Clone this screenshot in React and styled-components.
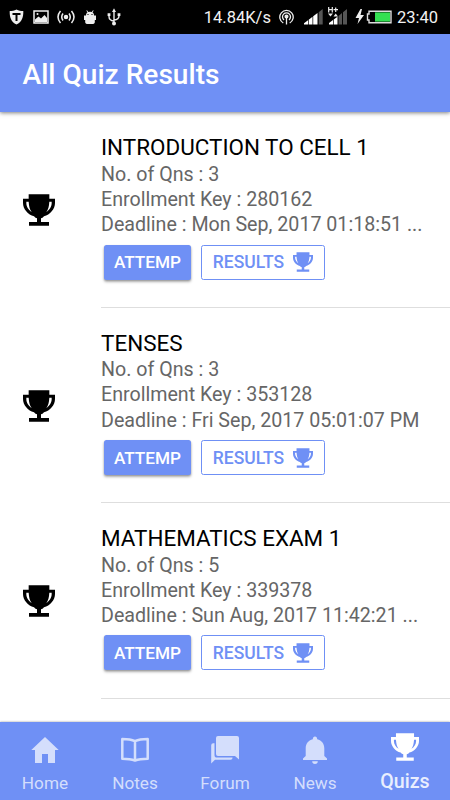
import React from "react";
import styled, { createGlobalStyle } from "styled-components";

const BLUE = "#6f90f5";

const GlobalStyle = createGlobalStyle`
  * { box-sizing: border-box; }
  body { margin: 0; background: #fff; font-family: Roboto, "Noto Sans", sans-serif; }
`;

const Screen = styled.div`
  width: 450px;
  height: 800px;
  display: flex;
  flex-direction: column;
  overflow: hidden;
  background: #fff;
`;

const StatusBar = styled.div`
  flex: none;
  height: 34px;
  padding: 0 12px 0 9px;
  display: flex;
  align-items: center;
  justify-content: space-between;
  background: #000;
  color: #f2f2f2;
  font-size: 16.5px;
`;

const StatusGroup = styled.div`
  display: flex;
  align-items: center;
  svg { display: block; flex: none; }
`;

const StatusText = styled.span`
  padding-top: 1px;
  line-height: 20px;
  white-space: nowrap;
`;

const Gap = styled.span`
  flex: none;
  width: ${(p) => p.$w}px;
`;

const Header = styled.header`
  flex: none;
  height: 78px;
  padding: 0 22.5px;
  display: flex;
  align-items: center;
  background: ${BLUE};
  box-shadow: 0 1px 4px rgba(0, 0, 0, 0.5);
  z-index: 1;
`;

const Title = styled.h1`
  margin: 3px 0 0;
  color: #fff;
  font-size: 28.1px;
  font-weight: 500;
  line-height: 34px;
  white-space: nowrap;
`;

const List = styled.main`
  flex: 1;
  padding-top: 0.7px;
  overflow: hidden;
`;

const Row = styled.article`
  height: 195.4px;
  display: flex;
`;

const RowIcon = styled.div`
  width: 101px;
  padding: 0 0 0 23px;
  display: flex;
  align-items: center;
  flex: none;
`;

const RowBody = styled.div`
  flex: 1;
  min-width: 0;
  padding-top: 21.5px;
  border-bottom: 1px solid #dedede;
`;

const QuizName = styled.h2`
  margin: 0 0 1.6px;
  color: #000;
  font-size: 22.45px;
  font-weight: 400;
  line-height: 26px;
  white-space: nowrap;
`;

const Detail = styled.p`
  margin: 0;
  color: #666;
  font-size: 19.65px;
  line-height: 25.2px;
  white-space: nowrap;
`;

const Actions = styled.div`
  display: flex;
  gap: 10px;
  padding: 7.3px 0 0 3px;
`;

const Button = styled.button`
  width: ${(p) => (p.$outline ? 124 : 87)}px;
  height: 35px;
  padding: 0;
  display: flex;
  align-items: center;
  justify-content: center;
  gap: 9px;
  border: ${(p) => (p.$outline ? `1px solid ${BLUE}` : "0")};
  border-radius: 2.5px;
  background: ${(p) => (p.$outline ? "transparent" : BLUE)};
  color: ${(p) => (p.$outline ? BLUE : "#fff")};
  box-shadow: ${(p) =>
    p.$outline ? "none" : "0 2px 3px rgba(0,0,0,.28), 0 1px 2px rgba(0,0,0,.2)"};
  font: 500 ${(p) => (p.$outline ? 17.5 : 17.2)}px/20px Roboto, sans-serif;
`;

const TabBar = styled.nav`
  flex: none;
  height: 78px;
  display: grid;
  grid-template-columns: repeat(5, 1fr);
  background: ${BLUE};
  box-shadow: 0 0 2px rgba(0, 0, 0, 0.4);
  z-index: 1;
`;

const Tab = styled.a`
  display: flex;
  flex-direction: column;
  align-items: center;
  color: ${(p) => (p.$active ? "#fff" : "#d4defc")};
  padding-top: ${(p) => (p.$active ? 11 : 14)}px;
  svg { display: block; }
`;

const TabLabel = styled.span`
  margin-top: ${(p) => (p.$active ? 9 : 6)}px;
  color: ${(p) => (p.$active ? "#e9eefe" : "inherit")};
  font-size: ${(p) => (p.$active ? 19.6 : 17.2)}px;
  font-weight: ${(p) => (p.$active ? 500 : 400)};
  line-height: ${(p) => (p.$active ? 24 : 22)}px;
`;

const Trophy = ({ size }) => (
  <svg width={size} height={size} viewBox="0 0 96 96" fill="currentColor">
    <path
      fillRule="evenodd"
      d="M17 1H79V14H96V27C96 45 81 62 63 67C60 71 57 72 54 73V84H78V95H18V84H42V73C39 72 36 71 33 67C15 62 0 45 0 27V14H17ZM17 23H10V28C10 38 17 49 26 54C20 46 18 37 17 23ZM79 23C78 37 76 46 70 54C79 49 86 38 86 28V23Z"
    />
  </svg>
);

const Home = () => (
  <svg width="30" height="30" viewBox="0 0 30 30" fill="currentColor">
    <path d="M15 1 28.7 14H25V27H18V18H12V27H5V14H1.3Z" />
  </svg>
);

const Book = () => (
  <svg width="30" height="30" viewBox="0 0 30 30" fill="none" stroke="currentColor" strokeWidth="2.5" strokeLinejoin="round">
    <path d="M15 5.2C11.5 3.5 7.5 3 2.3 3V22.7C7.5 22.7 11.5 23.2 15 24.6C18.5 23.2 22.5 22.7 27.7 22.7V3C22.5 3 18.5 3.5 15 5.2ZM15 5.2V24.4" />
  </svg>
);

const Forum = () => (
  <svg width="30" height="30" viewBox="0 0 30 30" fill="currentColor">
    <path d="M8 0H27Q29 0 29 2V23.5L25 20H8Q6 20 6 18V2Q6 0 8 0Z" />
    <path d="M3.2 7.2H4.5V19Q4.5 21.6 7 21.6H22.5V22Q22.5 23.8 20.5 23.8H5L1.2 27.6V9.2Q1.2 7.2 3.2 7.2Z" />
  </svg>
);

const Bell = () => (
  <svg width="30" height="30" viewBox="0 0 30 30" fill="currentColor">
    <path d="M15 .5C16.4 .5 17.2 1.6 17.2 3.3C21.8 4.4 24.3 8 24.3 12.5V20L27 22.5V24H3V22.5L5.7 20V12.5C5.7 8 8.2 4.4 12.8 3.3C12.8 1.6 13.6 .5 15 .5ZM12.2 25.3H17.8C17.8 27 16.7 28 15 28C13.3 28 12.2 27 12.2 25.3Z" />
  </svg>
);

const Shield = () => (
  <svg width="15" height="16" viewBox="0 0 15 16">
    <path d="M7.5 .5C9.5 1.7 12 2 14.3 2C14.5 8 13 13 7.5 15.6C2 13 .5 8 .7 2C3 2 5.5 1.7 7.5 .5Z" fill="#eee" />
    <path d="M3.5 5H11.5M7.5 5V12" stroke="#000" strokeWidth="2" />
  </svg>
);

const Picture = () => (
  <svg width="16" height="14" viewBox="0 0 16 14">
    <path d="M1 1H15V13H1Z" fill="none" stroke="#eee" strokeWidth="1.5" />
    <path d="M2 12V9.5L5.5 6.5 8 8.5 11.5 5 14 8V12Z" fill="#eee" />
    <circle cx="4.5" cy="4" r="1" fill="#eee" />
  </svg>
);

const Broadcast = () => (
  <svg width="18" height="14" viewBox="0 0 18 14" fill="none" stroke="#eee" strokeWidth="1.5">
    <circle cx="9" cy="7" r="1.5" fill="#eee" />
    <path d="M6 3.5Q3.5 7 6 10.5M12 3.5Q14.5 7 12 10.5M3.5 1Q-1.5 7 3.5 13M14.5 1Q19.5 7 14.5 13" />
  </svg>
);

const Droid = () => (
  <svg width="14" height="15" viewBox="0 0 14 15">
    <path d="M3 5.5C3 3.8 3.7 2.8 4.5 2.3L3.3 .7 4 .3 5.3 2Q7 1.4 8.7 2L10 .3 10.7 .7 9.5 2.3C10.3 2.8 11 3.8 11 5.5H13V10H11.8V12Q11.8 14 9 14H5Q2.2 14 2.2 12V10H1V5.5Z" fill="#eee" />
    <path d="M5 4V5M9 4V5" stroke="#000" />
  </svg>
);

const Usb = () => (
  <svg width="14" height="18" viewBox="0 0 14 18" fill="none" stroke="#eee" strokeWidth="1.4">
    <path d="M7 3V15M7 13Q2 12.5 2 8.5V6M7 12Q12 11.5 12 8V6" />
    <path d="M7 .3 9 4H5Z" fill="#eee" stroke="none" />
    <path d="M.6 5.2H3.4V8H.6ZM10.6 5.2H13.4V8H10.6Z" fill="#eee" stroke="none" />
    <circle cx="7" cy="15.5" r="2" fill="#eee" stroke="none" />
  </svg>
);

const Hotspot = () => (
  <svg width="15" height="16" viewBox="0 0 15 16" fill="none" stroke="#eee" strokeWidth="1.3">
    <path d="M4.3 14A6.7 6.7 0 1 1 10.7 14M5 11A4 4 0 1 1 10 11M7.5 8V15.5" />
    <circle cx="7.5" cy="7.5" r="1.4" fill="#eee" />
  </svg>
);

const Signal = () => (
  <svg width="19" height="16" viewBox="0 0 19 16">
    <path d="M0 15.5V14.3L4 11.2V15.5ZM4.7 15.5V10.7L8.5 7.8V15.5ZM9.2 15.5V7.2L13.5 4V15.5Z" fill="#fff" />
    <path d="M14.7 15.5V3.2L18.7 0V15.5Z" fill="#555" />
  </svg>
);

const DataSignal = () => (
  <svg width="20" height="20" viewBox="0 0 20 20">
    <path d="M1 17.5V16L5 13V17.5ZM5.7 17.5V12.5L9.5 9.7V17.5Z" fill="#fff" />
    <path d="M10.5 17.5V9L14 6V17.5ZM15 17.5V5.2L19 2V17.5Z" fill="#555" />
    <path d="M.7 0V5.5M4.3 0V5.5M.7 2.7H4.3M5.5 2.7H10M7.7 .5V5" stroke="#eee" strokeWidth="1.2" />
    <path d="M0 6.5H5L2.5 9.5ZM5.5 9.5H10L7.7 6.5Z" fill="#eee" />
  </svg>
);

const Battery = () => (
  <svg width="37" height="16" viewBox="0 0 37 16">
    <path d="M5.5 0 .5 9H4L2.5 15 9 6H5.5L7 0Z" fill="#eee" />
    <path d="M14 2.2H36V13.8H14V11H12.5V5H14Z" fill="none" stroke="#ddd" strokeWidth="1.4" />
    <path d="M20 3.4H35V12.6H20Z" fill="#34e052" />
  </svg>
);

const quizzes = [
  { name: "INTRODUCTION TO CELL 1", count: 3, key: 280162, deadline: "Mon Sep, 2017 01:18:51 ..." },
  { name: "TENSES", count: 3, key: 353128, deadline: "Fri Sep, 2017 05:01:07 PM" },
  { name: "MATHEMATICS EXAM 1", count: 5, key: 339378, deadline: "Sun Aug, 2017 11:42:21 ..." },
];

const tabs = [
  { label: "Home", icon: <Home /> },
  { label: "Notes", icon: <Book /> },
  { label: "Forum", icon: <Forum /> },
  { label: "News", icon: <Bell /> },
  { label: "Quizs", icon: <Trophy size={28} />, active: true },
];

export default function App() {
  return (
    <Screen>
      <GlobalStyle />
      <StatusBar>
        <StatusGroup>
          <Shield />
          <Gap $w={9} />
          <Picture />
          <Gap $w={8} />
          <Broadcast />
          <Gap $w={8} />
          <Droid />
          <Gap $w={10} />
          <Usb />
        </StatusGroup>
        <StatusGroup>
          <StatusText>14.84K/s</StatusText>
          <Gap $w={8} />
          <Hotspot />
          <Gap $w={10} />
          <Signal />
          <Gap $w={5} />
          <DataSignal />
          <Gap $w={7} />
          <Battery />
          <Gap $w={5} />
          <StatusText>23:40</StatusText>
        </StatusGroup>
      </StatusBar>
      <Header>
        <Title>All Quiz Results</Title>
      </Header>
      <List>
        {quizzes.map((q) => (
          <Row key={q.key}>
            <RowIcon>
              <Trophy size={32} />
            </RowIcon>
            <RowBody>
              <QuizName>{q.name}</QuizName>
              <Detail>No. of Qns : {q.count}</Detail>
              <Detail>Enrollment Key : {q.key}</Detail>
              <Detail>Deadline : {q.deadline}</Detail>
              <Actions>
                <Button>ATTEMP</Button>
                <Button $outline>
                  RESULTS
                  <Trophy size={20} />
                </Button>
              </Actions>
            </RowBody>
          </Row>
        ))}
      </List>
      <TabBar>
        {tabs.map((t) => (
          <Tab key={t.label} $active={t.active}>
            {t.icon}
            <TabLabel $active={t.active}>{t.label}</TabLabel>
          </Tab>
        ))}
      </TabBar>
    </Screen>
  );
}
